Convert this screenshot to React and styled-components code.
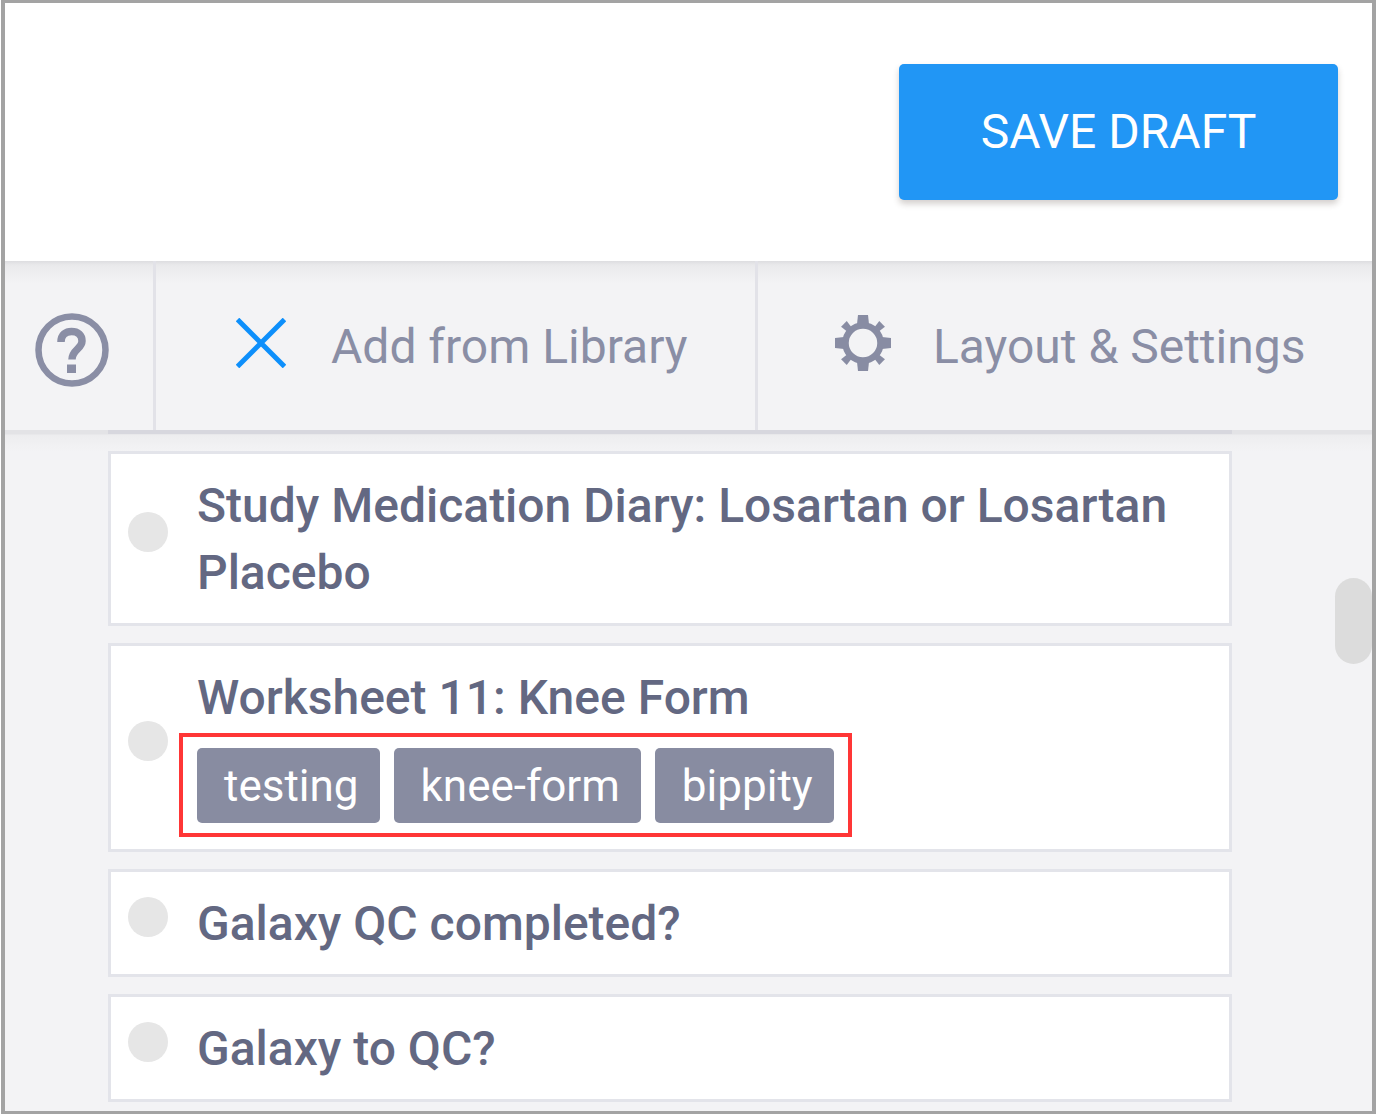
import React from "react";
import styled, { createGlobalStyle } from "styled-components";

const GlobalStyle = createGlobalStyle`
  *, *::before, *::after { box-sizing: border-box; }
  body {
    margin: 0;
    background: #ffffff;
    font-family: Roboto, "Liberation Sans", sans-serif;
  }
  button { font-family: inherit; cursor: pointer; }
`;

const Page = styled.div`
  min-height: 100vh;
  padding: 0 3px 4px 1px;
  display: flex;
`;

const Frame = styled.div`
  flex: 1;
  min-width: 0;
  display: flex;
  flex-direction: column;
  border: 4px solid #a3a3a3;
  border-top-width: 3px;
  border-bottom-width: 3px;
  background: #f3f3f5;
  overflow: hidden;
`;

const Header = styled.header`
  display: flex;
  justify-content: flex-end;
  padding: 61px 34px;
  background: #ffffff;
`;

const SaveButton = styled.button`
  min-width: 439px;
  height: 136px;
  padding: 0 48px;
  border: 0;
  border-radius: 5px;
  background: #2196f5;
  color: #ffffff;
  font-size: 48px;
  line-height: 64px;
  font-weight: 400;
  text-transform: uppercase;
  box-shadow: 0 4px 6px rgba(60, 40, 30, 0.22);
`;

const Toolbar = styled.nav`
  display: flex;
  height: 169px;
  background: linear-gradient(#dddde0, #e9e9eb 4px, #ececee 8px, #f3f3f5 22px);
`;

const ToolButton = styled.button`
  display: flex;
  align-items: center;
  gap: ${(p) => p.$gap || 0}px;
  flex: ${(p) => (p.$width ? `0 0 ${p.$width}px` : "1")};
  padding: 2px 0 0 ${(p) => p.$inset || 0}px;
  border: 0;
  border-right: ${(p) => (p.$last ? "0" : "3px solid #e2e2e8")};
  background: transparent;
  color: #8a8ea5;
  font-size: 48px;
  line-height: 64px;
  white-space: nowrap;

  svg { display: block; flex: none; }
`;

const IconSlot = styled.span`
  display: block;
  padding-bottom: ${(p) => p.$lift || 0}px;
  padding-top: ${(p) => p.$drop || 0}px;
`;

const Body = styled.main`
  flex: 1;
  display: flex;
  align-items: flex-start;
  padding-left: 103px;
  background: linear-gradient(#e3e3e6, #e3e3e6 4px, #ededef 5px, #f3f3f5 22px);
`;

const FormList = styled.ul`
  flex: 1;
  min-width: 0;
  display: flex;
  flex-direction: column;
  gap: 17px;
  margin: 0;
  padding: 0;
  list-style: none;
`;

const ScrolledEdge = styled.li`
  height: 4px;
  background: #d7d7de;
`;

const Card = styled.li`
  display: flex;
  align-items: center;
  gap: 29px;
  padding: 18px 17px 17px;
  border: 3px solid #e3e4ea;
  background: #ffffff;
`;

const Dot = styled.span`
  flex: none;
  width: 40px;
  height: 40px;
  margin-bottom: 14px;
  border-radius: 50%;
  background: #e6e6e6;
`;

const CardText = styled.div`
  flex: 1;
  min-width: 0;
`;

const Title = styled.h2`
  margin: 0;
  color: #636882;
  font-size: 48px;
  line-height: 67px;
  font-weight: 500;
`;

const Tags = styled.div`
  display: flex;
  gap: 14px;
  width: fit-content;
  margin: 2px 0 -5px -18px;
  padding: 11px 14px 10px;
  border: 4px solid #ff3636;
`;

const Tag = styled.span`
  height: 75px;
  padding: 0 21px 0 27px;
  border-radius: 5px;
  background: #888ca1;
  color: #ffffff;
  font-size: 44px;
  line-height: 76px;
`;

const ScrollTrack = styled.div`
  flex: 0 0 140px;
  display: flex;
  justify-content: flex-end;
  padding-top: 148px;
`;

const ScrollThumb = styled.span`
  width: 37px;
  height: 86px;
  border-radius: 19px;
  background: #dcdcdc;
`;

function HelpIcon() {
  return (
    <svg width="74" height="74" viewBox="0 0 74 74" fill="none" aria-hidden="true">
      <circle cx="37" cy="37" r="33.5" stroke="#8a8ea5" strokeWidth="6.5" />
      <path
        d="M26 29C26 21.5 31 18.5 36.5 18.5C43 18.5 47 22 47 28C47 36 37 36.5 37 46.5"
        stroke="#8a8ea5"
        strokeWidth="7.5"
      />
      <rect x="32" y="51.5" width="9" height="8.5" fill="#8a8ea5" />
    </svg>
  );
}

function CrossIcon() {
  return (
    <svg width="50" height="50" viewBox="0 0 50 50" aria-hidden="true">
      <path d="M1.5 1.5L48.5 48.5M48.5 1.5L1.5 48.5" stroke="#0d8ffb" strokeWidth="5" />
    </svg>
  );
}

const teeth = [0, 45, 90, 135, 180, 225, 270, 315];

function GearIcon() {
  return (
    <svg width="56" height="56" viewBox="0 0 56 56" fill="none" aria-hidden="true">
      <circle cx="28" cy="28" r="17.5" stroke="#888ca3" strokeWidth="6.5" />
      {teeth.map((angle) => (
        <path
          key={angle}
          d={angle % 90 ? "M24 1H32L31 9H25Z" : "M23 0H33L34 9H22Z"}
          fill="#888ca3"
          transform={`rotate(${angle} 28 28)`}
        />
      ))}
    </svg>
  );
}

const forms = [
  { title: "Study Medication Diary: Losartan or Losartan Placebo" },
  { title: "Worksheet 11: Knee Form", tags: ["testing", "knee-form", "bippity"] },
  { title: "Galaxy QC completed?" },
  { title: "Galaxy to QC?" },
];

export default function App() {
  return (
    <Page>
      <GlobalStyle />
      <Frame>
        <Header>
          <SaveButton type="button">Save Draft</SaveButton>
        </Header>
        <Toolbar>
          <ToolButton type="button" $width={151} $inset={30} aria-label="Help">
            <IconSlot $drop={6}><HelpIcon /></IconSlot>
          </ToolButton>
          <ToolButton type="button" $width={602} $inset={80} $gap={45}>
            <IconSlot $lift={8}><CrossIcon /></IconSlot>
            Add from Library
          </ToolButton>
          <ToolButton type="button" $inset={77} $gap={42} $last>
            <IconSlot $lift={8}><GearIcon /></IconSlot>
            Layout &amp; Settings
          </ToolButton>
        </Toolbar>
        <Body>
          <FormList>
            <ScrolledEdge aria-hidden="true" />
            {forms.map((form) => (
              <Card key={form.title}>
                <Dot />
                <CardText>
                  <Title>{form.title}</Title>
                  {form.tags && (
                    <Tags>
                      {form.tags.map((tag) => (
                        <Tag key={tag}>{tag}</Tag>
                      ))}
                    </Tags>
                  )}
                </CardText>
              </Card>
            ))}
          </FormList>
          <ScrollTrack>
            <ScrollThumb />
          </ScrollTrack>
        </Body>
      </Frame>
    </Page>
  );
}
